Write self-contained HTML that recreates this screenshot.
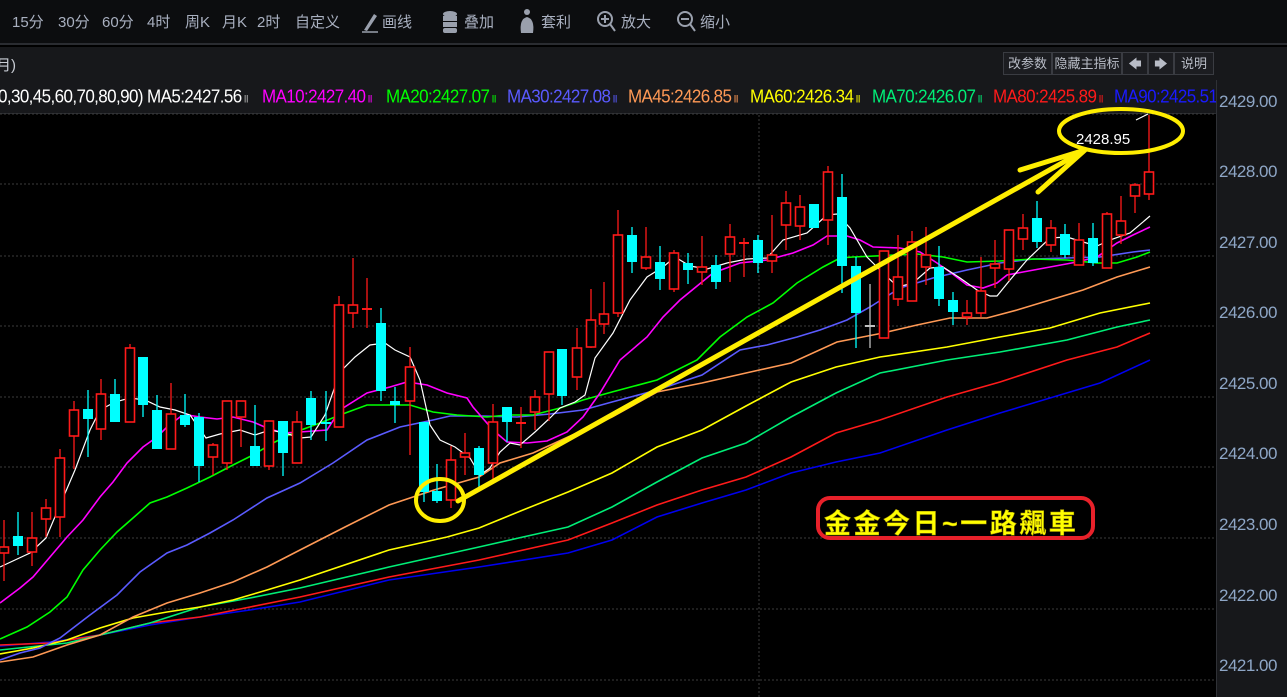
<!DOCTYPE html>
<html><head><meta charset="utf-8">
<style>
*{margin:0;padding:0;box-sizing:border-box}
body{width:1287px;height:697px;overflow:hidden;background:#000;font-family:"Liberation Sans","Noto Sans CJK SC",sans-serif;position:relative}
.tb{position:absolute;left:0;top:0;width:1287px;height:45px;background:#0c0d0f;border-bottom:2px solid #2a2c31}
.tb span{position:absolute;top:11px;font-size:15px;color:#a9b0c0;white-space:nowrap}
.r2{position:absolute;left:0;top:47px;width:1287px;height:33px;background:#17181b}
.btn{position:absolute;top:5px;height:23px;border:1px solid #3a3c42;color:#b8bcc6;font-size:13px;line-height:21px;text-align:center;background:#1c1d21}
.lg{position:absolute;left:0;top:80px;width:1216px;height:34px;background:#17181b;border-bottom:1px solid #2a2c31;overflow:hidden;white-space:nowrap}
.lg span{position:absolute;top:7px;font-size:17px;letter-spacing:-0.6px;transform:scaleY(1.1);transform-origin:0 50%}
.ax{position:absolute;left:1216px;top:80px;width:71px;height:617px;background:#17181b;border-left:1px solid #2f3136}
.ax span{position:absolute;left:2px;font-size:17px;color:#8ea6c6;letter-spacing:-0.5px}
.box{position:absolute;left:816px;top:496px;width:279px;height:44px;border:4px solid #e8212a;border-radius:14px;background:#000}
.box div{position:absolute;left:4px;top:2px;font-size:27px;font-weight:bold;color:#ffff00;letter-spacing:2.5px;font-family:"Liberation Sans","Noto Sans CJK TC",sans-serif;-webkit-text-stroke:0.5px #aa9900}
</style></head><body>
<div class="tb">
<span style="left:12px">15分</span><span style="left:58px">30分</span><span style="left:102px">60分</span><span style="left:147px">4时</span><span style="left:185px">周K</span><span style="left:222px">月K</span><span style="left:257px">2时</span><span style="left:295px">自定义</span>
<svg style="position:absolute;left:360px;top:11px" width="20" height="22"><path d="M4 19 L14 3 L17 5 L7 20 Z" fill="#9aa0ad"/><path d="M2 21 H18" stroke="#9aa0ad" stroke-width="1.5"/></svg>
<span style="left:382px">画线</span>
<svg style="position:absolute;left:441px;top:9px" width="18" height="26"><ellipse cx="9" cy="5" rx="7" ry="3" fill="#9aa0ad"/><rect x="2" y="7" width="14" height="5" fill="#9aa0ad"/><rect x="2" y="13" width="14" height="5" fill="#9aa0ad"/><rect x="2" y="19" width="14" height="5" rx="2" fill="#9aa0ad"/></svg>
<span style="left:464px">叠加</span>
<svg style="position:absolute;left:518px;top:7px" width="18" height="28"><circle cx="9" cy="5" r="3" fill="#9aa0ad"/><path d="M3 26 Q1 12 9 10 Q17 12 15 26 Z" fill="#9aa0ad"/></svg>
<span style="left:541px">套利</span>
<svg style="position:absolute;left:596px;top:9px" width="22" height="26"><circle cx="9" cy="10" r="7" stroke="#9aa0ad" stroke-width="2" fill="none"/><path d="M9 6V14M5 10H13M14 15L19 22" stroke="#9aa0ad" stroke-width="2"/></svg>
<span style="left:621px">放大</span>
<svg style="position:absolute;left:676px;top:9px" width="22" height="26"><circle cx="9" cy="10" r="7" stroke="#9aa0ad" stroke-width="2" fill="none"/><path d="M5 10H13M14 15L19 22" stroke="#9aa0ad" stroke-width="2"/></svg>
<span style="left:700px">缩小</span>
</div>
<div class="r2">
<span style="position:absolute;left:-4px;top:7px;font-size:15px;color:#c8ccd4">月)</span>
<div class="btn" style="left:1003px;width:49px">改参数</div>
<div class="btn" style="left:1052px;width:70px">隐藏主指标</div>
<div class="btn" style="left:1122px;width:26px">🡄</div>
<div class="btn" style="left:1148px;width:26px">🡆</div>
<div class="btn" style="left:1174px;width:40px">说明</div>
</div>
<div class="lg">
<span style="left:-2px;color:#fff">0,30,45,60,70,80,90)&nbsp;MA5:2427.56<small style="font-size:10px;color:#aaa"> II</small></span>
<span style="left:262px;color:#ff00ff">MA10:2427.40<small style="font-size:10px"> II</small></span>
<span style="left:386px;color:#00ff00">MA20:2427.07<small style="font-size:10px"> II</small></span>
<span style="left:507px;color:#5a5aff">MA30:2427.08<small style="font-size:10px"> II</small></span>
<span style="left:628px;color:#ff9955">MA45:2426.85<small style="font-size:10px"> II</small></span>
<span style="left:750px;color:#ffff00">MA60:2426.34<small style="font-size:10px"> II</small></span>
<span style="left:872px;color:#00ee77">MA70:2426.07<small style="font-size:10px"> II</small></span>
<span style="left:993px;color:#ff1a1a">MA80:2425.89<small style="font-size:10px"> II</small></span>
<span style="left:1114px;color:#1a1aff">MA90:2425.51</span>
</div>
<div class="ax">
<span style="top:12px">2429.00</span><span style="top:82px">2428.00</span><span style="top:153px">2427.00</span><span style="top:223px">2426.00</span><span style="top:294px">2425.00</span><span style="top:364px">2424.00</span><span style="top:435px">2423.00</span><span style="top:506px">2422.00</span><span style="top:576px">2421.00</span>
</div>
<svg id="ch" style="position:absolute;left:0;top:0" width="1216" height="697">
<g stroke="#3c3c3c" stroke-dasharray="2,2" stroke-width="1">
<path d="M0 114H1216M0 184H1216M0 256H1216M0 326H1216M0 397H1216M0 467H1216M0 538H1216M0 609H1216M0 680H1216M759 115V697"/>
</g>
<g id="lines" fill="none" stroke-width="1.6"></g>
<g id="cs"></g>
<g fill="none" stroke="#ffee00" stroke-linecap="round">
<path d="M458 501 L1078 154" stroke-width="5"/>
<path d="M1085 150 L1020 170 M1085 150 L1038 192" stroke-width="5"/>
<ellipse cx="440" cy="500" rx="24" ry="21" stroke-width="4"/>
<ellipse cx="1121" cy="131" rx="62" ry="22" stroke-width="4"/>
</g>
<path d="M1136 120 L1148 114" stroke="#fff" stroke-width="1.2"/>
<text x="1076" y="144" fill="#fff" font-size="15" font-family="Liberation Sans">2428.95</text>
</svg>
<div class="box"><div>金金今日~一路飆車</div></div>
<script>
var C=[["r",4,547,553,520,581],["c",18,536,546,512,555],["r",32,538,552,512,566],["r",46,508,519,499,537],["r",60,458,517,449,537],["r",74,410,436,401,469],["c",88,409,419,390,457],["r",101,394,429,379,440],["c",115,394,422,379,422],["r",130,348,422,344,422],["c",143,357,405,357,417],["c",157,410,449,395,449],["r",171,414,449,383,449],["c",185,415,425,394,427],["c",199,417,466,413,482],["r",213,445,457,443,475],["r",227,401,463,401,470],["r",241,401,417,401,447],["c",255,446,466,405,466],["r",269,421,466,421,470],["c",283,421,453,421,476],["r",297,422,463,411,463],["c",311,398,425,391,440],["c",326,422,424,391,441],["r",339,305,427,296,427],["r",353,305,313,258,328],["r",367,308,310,278,328],["c",381,323,391,308,401],["c",395,401,405,387,423],["r",410,367,401,347,455],["c",424,422,492,422,502],["c",437,491,501,464,503],["r",451,460,500,446,508],["r",465,453,457,433,475],["c",479,448,475,446,487],["r",493,422,463,404,480],["c",507,407,422,407,442],["r",521,422,424,407,448],["r",535,397,412,390,430],["r",549,352,394,352,421],["c",562,349,396,349,405],["r",577,348,377,328,390],["r",591,320,347,289,348],["r",604,314,324,282,334],["r",618,235,313,210,317],["c",632,235,262,227,273],["r",646,257,268,227,270],["c",660,262,279,246,290],["r",674,253,289,250,292],["c",688,263,270,253,284],["r",702,267,272,236,285],["c",716,265,282,255,289],["r",730,237,254,224,282],["r",744,242,244,238,277],["c",758,240,263,235,273],["r",772,255,261,215,273],["r",786,203,225,191,250],["r",800,207,226,195,240],["c",814,204,228,204,228],["r",828,172,220,166,245],["c",842,197,266,174,293],["c",856,266,313,257,348],["g",870,325,327,284,348],["r",884,251,338,251,338],["r",898,277,299,235,306],["r",912,242,301,231,301],["r",926,255,267,227,285],["c",939,267,299,246,306],["c",953,300,312,292,325],["r",967,313,317,300,325],["r",981,291,313,257,317],["r",995,264,268,240,288],["r",1009,230,269,230,281],["r",1023,228,239,214,250],["c",1037,218,242,201,248],["r",1051,228,245,220,252],["c",1065,234,255,224,258],["r",1079,240,265,223,265],["c",1093,238,263,223,266],["r",1107,214,268,212,268],["r",1121,221,235,196,244],["r",1135,185,196,183,213],["r",1149,172,194,115,200]];
var L={
"#0000ee":"0,646 50,642 100,635 150,625 200,617 250,610 300,602 389,580 479,567 568,553 612,540 657,517 702,503 746,490 791,473 836,462 880,453 947,430 1000,413 1050,398 1100,383 1150,360",
"#ff1a1a":"0,645 50,643 100,635 150,623 200,617 250,607 300,597 389,577 479,560 568,540 612,523 657,505 702,490 746,477 791,457 836,433 880,420 947,397 1000,382 1067,360 1117,347 1150,333",
"#00ee77":"0,650 67,643 100,635 150,623 200,607 250,598 300,588 389,567 479,547 523,537 568,527 612,507 657,482 702,458 746,443 791,417 836,393 880,373 947,360 1000,352 1067,340 1117,327 1150,320",
"#ffff00":"0,654 33,648 67,640 100,628 133,618 167,612 200,607 233,600 267,590 300,580 389,550 447,537 479,528 523,510 568,492 612,473 657,447 702,430 746,406 791,382 836,367 880,357 947,347 1000,337 1050,328 1100,313 1150,303",
"#ff9955":"0,662 33,657 67,645 100,635 133,617 167,603 200,593 233,582 267,567 300,550 345,527 389,505 434,490 479,477 500,463 533,453 568,437 612,417 657,392 702,383 746,373 791,363 837,342 883,333 917,325 950,318 987,318 1017,310 1050,300 1083,290 1117,277 1150,267",
"#5b5bff":"0,660 20,653 40,648 60,638 90,615 117,595 140,572 167,553 187,545 210,533 233,520 267,498 300,483 333,463 367,440 400,427 433,420 450,416 483,416 517,417 550,414 583,410 612,402 657,390 702,375 740,350 767,345 797,337 820,330 847,320 870,307 900,288 933,278 967,270 1000,263 1033,259 1067,258 1100,257 1133,252 1150,250",
"#00ff00":"0,639 27,627 50,612 67,597 83,570 100,550 117,532 133,518 150,503 167,497 187,488 210,477 233,465 253,455 273,443 293,433 320,423 340,415 367,405 410,405 433,412 457,415 487,417 507,415 533,415 560,408 583,400 612,392 657,380 697,360 720,337 747,317 773,303 797,283 823,267 840,258 853,257 917,254 943,257 967,262 1000,261 1033,259 1067,260 1097,263 1117,263 1137,257 1150,252",
"#ff00ff":"0,603 20,588 33,577 50,557 67,537 83,520 100,497 113,482 127,463 143,447 157,437 167,427 180,417 187,415 200,417 217,419 233,417 253,422 267,428 283,433 300,432 327,430 340,410 367,393 390,387 407,382 427,385 447,393 467,398 473,407 493,430 507,442 527,443 547,441 567,432 583,417 600,393 620,360 647,337 663,317 680,300 713,273 740,263 767,260 793,253 813,245 827,236 847,236 860,240 873,247 900,248 920,252 937,263 950,272 967,285 983,288 997,283 1007,275 1023,272 1050,267 1077,262 1097,257 1117,243 1133,235 1150,227",
"#ffffff":"0,567 30,553 46,538 60,505 75,470 90,430 100,410 115,402 130,398 145,400 160,407 175,410 190,415 206,438 220,434 240,430 255,435 270,430 285,433 300,438 311,437 325,415 340,372 355,357 370,345 385,343 395,350 410,357 420,380 430,425 440,440 455,447 470,458 480,475 490,468 500,452 510,443 520,445 535,432 550,418 560,408 575,402 585,395 595,358 613,333 630,300 647,277 663,267 675,257 690,266 707,269 727,263 747,259 767,258 783,240 807,233 827,215 837,214 850,228 867,257 883,273 898,287 913,283 930,268 943,267 960,278 977,290 990,296 997,296 1010,280 1027,260 1050,238 1067,237 1083,242 1097,246 1110,240 1130,233 1150,216"};
var ns="http://www.w3.org/2000/svg",g=document.getElementById("lines");
for(var k in L){var p=document.createElementNS(ns,"polyline");p.setAttribute("points",L[k]);p.setAttribute("stroke",k);if(k=="#ffffff")p.setAttribute("stroke-width","1.2");g.appendChild(p);}
var cs=document.getElementById("cs"),h="";
C.forEach(function(c){var t=c[0],x=c[1],a=c[2],b=c[3],wt=c[4],wb=c[5];
var col=t=="r"?"#ff1a1a":t=="c"?"#00ffff":"#c0c0c0";
h+='<path d="M'+x+' '+wt+'V'+wb+'" stroke="'+col+'" stroke-width="1.3"/>';
if(b-a<3){h+='<rect x="'+(x-5)+'" y="'+a+'" width="10" height="'+Math.max(2,b-a)+'" fill="'+col+'"/>';}
else if(t=="r"){h+='<rect x="'+(x-4.5)+'" y="'+a+'" width="9" height="'+(b-a)+'" fill="#000" stroke="'+col+'" stroke-width="1.6"/>';}
else{h+='<rect x="'+(x-5)+'" y="'+a+'" width="10" height="'+(b-a)+'" fill="'+col+'"/>';}
});
cs.innerHTML=h;
</script>
</body></html>
